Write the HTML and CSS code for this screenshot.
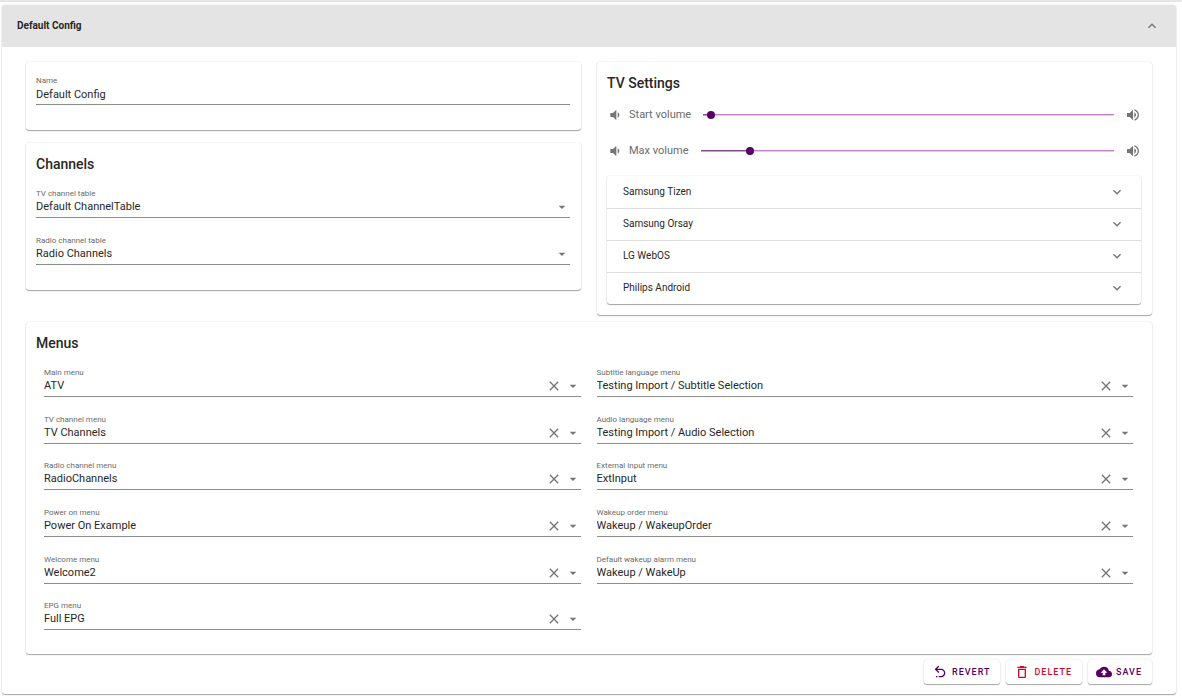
FILE: index.html
```html
<!DOCTYPE html>
<html lang="en">
<head>
<meta charset="utf-8">
<title>Default Config</title>
<link rel="stylesheet" href="styles.css">
</head>
<body>
<svg class="sprite" aria-hidden="true">
  <symbol id="i-down" viewBox="0 0 24 24"><path d="M7.41 8.58L12 13.17l4.59-4.59L18 10l-6 6-6-6z"/></symbol>
  <symbol id="i-up" viewBox="0 0 24 24"><path d="M7.41 15.41L12 10.83l4.59 4.58L18 14l-6-6-6 6z"/></symbol>
  <symbol id="i-caret" viewBox="0 0 24 24"><path d="M7 10l5 5 5-5z"/></symbol>
  <symbol id="i-close" viewBox="0 0 24 24"><path d="M19 6.41L17.59 5 12 10.59 6.41 5 5 6.41 10.59 12 5 17.59 6.41 19 12 13.41 17.59 19 19 17.59 13.41 12z"/></symbol>
  <symbol id="i-vol-low" viewBox="0 0 24 24"><path d="M5 9v6h4l5 5V4L9 9m9.500 3c0-1.770-1-3.290-2.500-4.030v8.050c1.500-.74 2.500-2.260 2.500-4.020z"/></symbol>
  <symbol id="i-vol-high" viewBox="0 0 24 24"><path d="M14 3.230v2.060c2.890.86 5 3.540 5 6.710s-2.110 5.840-5 6.700v2.070c4-.91 7-4.490 7-8.770s-3-7.860-7-8.770M16.500 12c0-1.770-1-3.290-2.500-4.030V16c1.500-.71 2.500-2.240 2.500-4M3 9v6h4l5 5V4L7 9z"/></symbol>
  <symbol id="i-revert" viewBox="0 0 24 24"><path d="M13.500 7a6.500 6.500 0 0 1 0 13H10v-2h3.500c2.500 0 4.500-2 4.500-4.500S16 9 13.500 9H7.830l3.080 3.090L9.500 13.500 4 8l5.500-5.500 1.420 1.410L7.830 7zM6 18h2v2H6z"/></symbol>
  <symbol id="i-delete" viewBox="0 0 24 24"><path d="M6 19a2 2 0 0 0 2 2h8a2 2 0 0 0 2-2V7H6zM8 9h8v10H8zm7.500-5l-1-1h-5l-1 1H5v2h14V4z"/></symbol>
  <symbol id="i-upload" viewBox="0 0 24 24"><path d="M14 13v4h-4v-4H7l5-5 5 5m2.350-2.970A7.490 7.490 0 0 0 12 4C9.110 4 6.600 5.640 5.350 8.030A6.004 6.004 0 0 0 0 14a6 6 0 0 0 6 6h13a5 5 0 0 0 5-5c0-2.640-2.050-4.780-4.650-4.970z"/></symbol>
</svg>
<main class="panel">
  <button class="panel-header" type="button" aria-expanded="true">
    <span>Default Config</span>
    <svg class="icon"><use href="#i-up"/></svg>
  </button>
  <form class="panel-body">
    <div class="columns">
      <div class="column">
        <section class="card name-card">
          <div class="field">
            <label for="name">Name</label>
            <div class="control"><input id="name" type="text" value="Default Config"></div>
          </div>
        </section>
        <section class="card">
          <h2>Channels</h2>
          <div class="fields">
            <div class="field">
              <label for="tv-table">TV channel table</label>
              <div class="control"><select id="tv-table"><option>Default ChannelTable</option></select><svg class="icon"><use href="#i-caret"/></svg></div>
            </div>
            <div class="field">
              <label for="radio-table">Radio channel table</label>
              <div class="control"><select id="radio-table"><option>Radio Channels</option></select><svg class="icon"><use href="#i-caret"/></svg></div>
            </div>
          </div>
        </section>
      </div>
      <section class="card tv-card">
        <h2>TV Settings</h2>
        <div class="volume">
          <svg class="icon"><use href="#i-vol-low"/></svg>
          <label for="start-volume">Start volume</label>
          <input id="start-volume" type="range" min="0" max="100" value="2" style="--value: 0.02">
          <svg class="icon"><use href="#i-vol-high"/></svg>
        </div>
        <div class="volume">
          <svg class="icon"><use href="#i-vol-low"/></svg>
          <label for="max-volume">Max volume</label>
          <input id="max-volume" type="range" min="0" max="100" value="12" style="--value: 0.12">
          <svg class="icon"><use href="#i-vol-high"/></svg>
        </div>
        <div class="platforms">
          <button type="button" aria-expanded="false"><span>Samsung Tizen</span><svg class="icon"><use href="#i-down"/></svg></button>
          <button type="button" aria-expanded="false"><span>Samsung Orsay</span><svg class="icon"><use href="#i-down"/></svg></button>
          <button type="button" aria-expanded="false"><span>LG WebOS</span><svg class="icon"><use href="#i-down"/></svg></button>
          <button type="button" aria-expanded="false"><span>Philips Android</span><svg class="icon"><use href="#i-down"/></svg></button>
        </div>
      </section>
    </div>
    <section class="card menus-card">
      <h2>Menus</h2>
      <div class="menu-grid">
        <div class="field"><label for="m1">Main menu</label><div class="control"><select id="m1"><option>ATV</option></select><button class="clear" type="button" aria-label="Clear"><svg class="icon"><use href="#i-close"/></svg></button><svg class="icon"><use href="#i-caret"/></svg></div></div>
        <div class="field"><label for="m2">Subtitle language menu</label><div class="control"><select id="m2"><option>Testing Import / Subtitle Selection</option></select><button class="clear" type="button" aria-label="Clear"><svg class="icon"><use href="#i-close"/></svg></button><svg class="icon"><use href="#i-caret"/></svg></div></div>
        <div class="field"><label for="m3">TV channel menu</label><div class="control"><select id="m3"><option>TV Channels</option></select><button class="clear" type="button" aria-label="Clear"><svg class="icon"><use href="#i-close"/></svg></button><svg class="icon"><use href="#i-caret"/></svg></div></div>
        <div class="field"><label for="m4">Audio language menu</label><div class="control"><select id="m4"><option>Testing Import / Audio Selection</option></select><button class="clear" type="button" aria-label="Clear"><svg class="icon"><use href="#i-close"/></svg></button><svg class="icon"><use href="#i-caret"/></svg></div></div>
        <div class="field"><label for="m5">Radio channel menu</label><div class="control"><select id="m5"><option>RadioChannels</option></select><button class="clear" type="button" aria-label="Clear"><svg class="icon"><use href="#i-close"/></svg></button><svg class="icon"><use href="#i-caret"/></svg></div></div>
        <div class="field"><label for="m6">External input menu</label><div class="control"><select id="m6"><option>ExtInput</option></select><button class="clear" type="button" aria-label="Clear"><svg class="icon"><use href="#i-close"/></svg></button><svg class="icon"><use href="#i-caret"/></svg></div></div>
        <div class="field"><label for="m7">Power on menu</label><div class="control"><select id="m7"><option>Power On Example</option></select><button class="clear" type="button" aria-label="Clear"><svg class="icon"><use href="#i-close"/></svg></button><svg class="icon"><use href="#i-caret"/></svg></div></div>
        <div class="field"><label for="m8">Wakeup order menu</label><div class="control"><select id="m8"><option>Wakeup / WakeupOrder</option></select><button class="clear" type="button" aria-label="Clear"><svg class="icon"><use href="#i-close"/></svg></button><svg class="icon"><use href="#i-caret"/></svg></div></div>
        <div class="field"><label for="m9">Welcome menu</label><div class="control"><select id="m9"><option>Welcome2</option></select><button class="clear" type="button" aria-label="Clear"><svg class="icon"><use href="#i-close"/></svg></button><svg class="icon"><use href="#i-caret"/></svg></div></div>
        <div class="field"><label for="m10">Default wakeup alarm menu</label><div class="control"><select id="m10"><option>Wakeup / WakeUp</option></select><button class="clear" type="button" aria-label="Clear"><svg class="icon"><use href="#i-close"/></svg></button><svg class="icon"><use href="#i-caret"/></svg></div></div>
        <div class="field"><label for="m11">EPG menu</label><div class="control"><select id="m11"><option>Full EPG</option></select><button class="clear" type="button" aria-label="Clear"><svg class="icon"><use href="#i-close"/></svg></button><svg class="icon"><use href="#i-caret"/></svg></div></div>
      </div>
    </section>
    <div class="actions">
      <button type="button"><svg class="icon"><use href="#i-revert"/></svg>REVERT</button>
      <button class="danger" type="button"><svg class="icon"><use href="#i-delete"/></svg>DELETE</button>
      <button type="submit"><svg class="icon"><use href="#i-upload"/></svg>SAVE</button>
    </div>
  </form>
</main>
</body>
</html>
```
FILE: styles.css
```css
:root {
  --text: #272727;
  --muted: #6b6b6b;
  --icon: #757575;
  --primary: #560062;
  --danger: #cf0a2c;
  --shadow: 0 1px 1px rgba(0, 0, 0, 0.22), 0 1px 1px rgba(0, 0, 0, 0.14), 0 0 2px rgba(0, 0, 0, 0.14);
}

* {
  box-sizing: border-box;
}

body {
  margin: 0;
  padding: 3px 6px 4px 2px;
  border-top: 2px solid #e6e6e6;
  background: #fff;
  color: var(--text);
  font: 11px/14px Roboto, sans-serif;
}

button,
input,
select {
  margin: 0;
  padding: 0;
  border: 0;
  background: none;
  color: inherit;
  font: inherit;
}

.sprite {
  display: none;
}

.icon {
  display: block;
  flex: none;
  width: 16px;
  height: 16px;
  fill: var(--icon);
}

.panel {
  border-radius: 3px;
  box-shadow: var(--shadow);
}

.panel-header {
  display: flex;
  align-items: center;
  justify-content: space-between;
  width: 100%;
  height: 42px;
  padding: 0 16px 0 15px;
  border-radius: 3px 3px 0 0;
  background: #e4e4e4;
  font-size: 10px;
  font-weight: 700;
}

.panel-body {
  padding: 15px 24px 10px;
}

.columns {
  display: grid;
  grid-template-columns: 1fr 1fr;
  gap: 16px;
  align-items: start;
}

.column {
  display: grid;
  gap: 13px;
}

.card {
  padding: 11px 11px 25px 10px;
  border-radius: 3px;
  box-shadow: var(--shadow);
}

.name-card {
  padding-top: 13px;
}

.tv-card {
  padding-bottom: 11px;
}

h2 {
  margin: 0;
  font-size: 14px;
  font-weight: 500;
  line-height: 20px;
}

.fields {
  display: grid;
  gap: 17px;
  margin-top: 14px;
}

.field label {
  display: block;
  color: var(--muted);
  font-size: 8px;
  line-height: 11px;
}

.control {
  display: flex;
  align-items: center;
  height: 19px;
  padding-bottom: 2px;
  border-bottom: 1px solid #8c8c8c;
}

.control input,
.control select {
  flex: 1;
  min-width: 0;
  height: 16px;
  appearance: none;
  outline: none;
}

.clear {
  margin-right: 3px;
}

.volume {
  display: flex;
  align-items: center;
  height: 36px;
}

.volume:first-of-type {
  margin-top: 4px;
}

.volume label {
  margin: 0 8px 0 6px;
  color: var(--muted);
}

.volume input {
  --track: calc(100% - 8px);
  flex: 1;
  min-width: 0;
  height: 8px;
  margin-right: 7px;
  appearance: none;
  background:
    linear-gradient(#844a8c 50%, #c4a5c8 50%) no-repeat 4px 3px / calc(var(--track) * var(--value)) 2px,
    linear-gradient(#c580cb 50%, #e6c6e9 50%) no-repeat 4px 3px / var(--track) 2px;
}

.volume input::-webkit-slider-thumb {
  width: 8px;
  height: 8px;
  border-radius: 50%;
  appearance: none;
  background: var(--primary);
}

.platforms {
  margin-top: 7px;
  border-radius: 3px;
  box-shadow: var(--shadow);
}

.platforms button {
  display: flex;
  align-items: center;
  justify-content: space-between;
  width: 100%;
  height: 32px;
  padding: 0 16px;
  font-size: 10px;
}

.platforms button + button {
  padding-bottom: 1px;
  border-top: 1px solid #dedede;
}

.menus-card {
  margin-top: 7px;
  padding-bottom: 7px;
}

.menu-grid {
  display: grid;
  grid-template-columns: 1fr 1fr;
  column-gap: 16px;
  min-height: 280px;
  margin: 14px 8px 0;
}

.actions {
  display: flex;
  justify-content: flex-end;
  gap: 6px;
  margin-top: 6px;
}

.actions button {
  display: flex;
  align-items: center;
  gap: 4px;
  height: 24px;
  padding: 0 10px 0 8px;
  border-radius: 3px;
  box-shadow: var(--shadow);
  color: var(--primary);
  font-size: 9px;
  font-weight: 500;
  letter-spacing: 1px;
}

.actions .icon {
  fill: currentColor;
}

.actions .danger {
  color: var(--danger);
}
```
